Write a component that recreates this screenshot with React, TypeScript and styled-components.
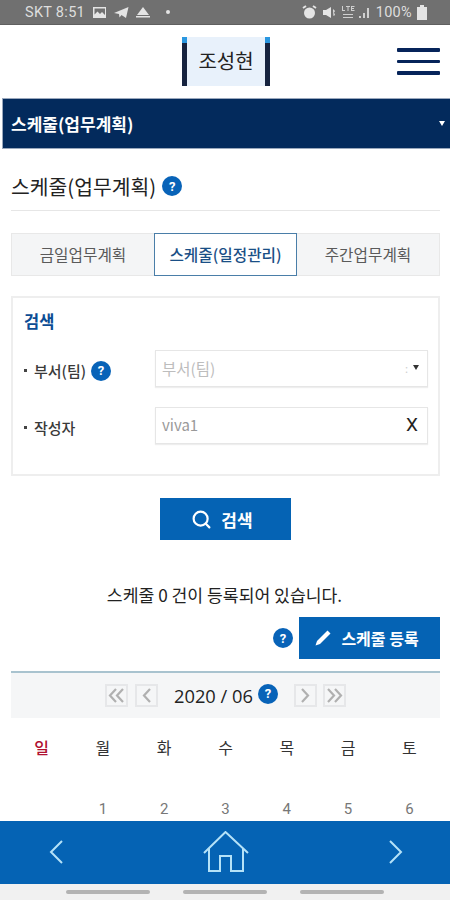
import React from "react";
import styled, { createGlobalStyle } from "styled-components";
import { Search } from "lucide-react";

const Global = createGlobalStyle`
  html, body { margin: 0; padding: 0; background: #fff; }
  * { box-sizing: border-box; }
  body { font-family: "Noto Sans CJK KR", "Noto Sans", sans-serif; }
`;

const Screen = styled.div`
  width: 450px;
  height: 900px;
  display: flex;
  flex-direction: column;
  overflow: hidden;
  background: #fff;
`;

const StatusBar = styled.div`
  height: 25px;
  flex: none;
  background: #707070;
  border-bottom: 1px solid #5f5f5f;
  color: #dedede;
  font: 400 14.5px Roboto, sans-serif;
  letter-spacing: 0.3px;
  display: flex;
  align-items: center;
  justify-content: space-between;
  padding: 0 23px 0 25px;
`;
const StatusGroup = styled.div`
  display: flex;
  align-items: center;
  gap: ${(p: { $gap: number }) => p.$gap}px;
`;

const Header = styled.header`
  height: 73px;
  flex: none;
  position: relative;
  display: flex;
  justify-content: center;
  padding-top: 12px;
`;
const Logo = styled.div`
  width: 88px;
  height: 49px;
  margin-left: 2px;
  background: #e8f1fb;
  border-left: 5px solid #16233f;
  border-right: 5px solid #16233f;
  display: flex;
  align-items: center;
  justify-content: center;
  font-size: 20px;
  font-weight: 400;
  color: #222;
  position: relative;
  padding-bottom: 2px;
  &::before, &::after {
    content: "";
    position: absolute;
    top: 0;
    width: 5px;
    height: 6px;
    background: #2a97e0;
  }
  &::before { left: -5px; }
  &::after { right: -5px; }
`;
const Burger = styled.div`
  position: absolute;
  left: 397px;
  top: 23px;
  width: 43px;
  display: flex;
  flex-direction: column;
  gap: 8px;
  span {
    display: block;
    height: 3.500px;
    border-radius: 1px;
    background: #06245a;
  }
`;

const NavSelect = styled.div`
  height: 51px;
  flex: none;
  margin-left: 2px;
  background: #032a5c;
  border: 1px solid #9aa8bd;
  border-right: none;
  color: #fff;
  font-size: 17px;
  font-weight: 700;
  display: flex;
  align-items: center;
  justify-content: space-between;
  padding: 0 5px 0 8px;
`;
const Caret = styled.span`
  width: 0;
  height: 0;
  border-left: 3px solid transparent;
  border-right: 3px solid transparent;
  border-top: 5px solid ${(p: { $color: string }) => p.$color};
`;

const Content = styled.main`
  flex: 1;
  min-height: 0;
  overflow: hidden;
  padding: 0 10px 0 11px;
`;

const Title = styled.div`
  height: 62px;
  border-bottom: 1px solid #e6e6e6;
  display: flex;
  align-items: center;
  gap: 6px;
  font-size: 20.400px;
  color: #222;
  padding-top: 13px;
`;
const Help = styled.span`
  width: 20px;
  height: 20px;
  flex: none;
  border-radius: 50%;
  background: #0863b8;
  color: #fff;
  font: 700 13px/1 Roboto, sans-serif;
  display: inline-flex;
  align-items: center;
  justify-content: center;
`;

const Tabs = styled.div`
  margin-top: 22px;
  height: 43px;
  display: grid;
  grid-template-columns: 142px 143px 142px;
  background: #f4f5f6;
  border: 1px solid #e8e8e8;
`;
const Tab = styled.div<{ $active?: boolean }>`
  display: flex;
  align-items: center;
  justify-content: center;
  font-size: 15.700px;
  margin: ${(p) => (p.$active ? "-1px 0" : "0")};
  color: ${(p) => (p.$active ? "#1a4f86" : "#5a5a5a")};
  font-weight: ${(p) => (p.$active ? 500 : 400)};
  background: ${(p) => (p.$active ? "#fff" : "transparent")};
  border: ${(p) => (p.$active ? "1.500px solid #4a7ea8" : "none")};
`;

const SearchBox = styled.section`
  margin-top: 20px;
  height: 180px;
  border: 2px solid #eeeeee;
  padding: 11px 10px 0 11px;
`;
const SearchHeading = styled.div`
  font-size: 16.500px;
  font-weight: 700;
  color: #0b4c94;
  line-height: 24px;
  height: 41px;
`;
const FieldRow = styled.div`
  display: grid;
  grid-template-columns: 131px 1fr;
  align-items: center;
  height: 37px;
  margin-bottom: 20px;
`;
const FieldLabel = styled.div`
  display: flex;
  align-items: center;
  gap: 5px;
  font-size: 15px;
  font-weight: 500;
  color: #3a3a3a;
  padding-top: 4px;
  &::before {
    content: "";
    width: 3px;
    height: 3px;
    background: #444;
    margin-right: 2px;
  }
`;
const FieldInput = styled.div<{ $muted?: boolean }>`
  height: 37px;
  border: 1px solid #e6e6e6;
  box-shadow: 0 1px 1px #eee;
  display: flex;
  align-items: center;
  justify-content: space-between;
  padding: 0 8px 2px 6px;
  font-size: ${(p) => (p.$muted ? 15.5 : 15)}px;
  color: ${(p) => (p.$muted ? "#bdbdbd" : "#999")};
`;
const SelectEnd = styled.span`
  display: flex;
  align-items: center;
  gap: 5px;
  font-size: 11px;
  color: #d0d0d0;
`;
const ClearMark = styled.span`
  font: 400 19px Roboto, sans-serif;
  color: #222;
  margin-right: 1px;
`;

const SearchRow = styled.div`
  display: flex;
  justify-content: center;
  margin-top: 22px;
`;
const PrimaryButton = styled.div<{ $w: number; $gap: number; $pr: number; $fs: number }>`
  width: ${(p) => p.$w}px;
  height: 42px;
  background: #0563b4;
  color: #fff;
  display: flex;
  align-items: center;
  justify-content: center;
  gap: ${(p) => p.$gap}px;
  padding-right: ${(p) => p.$pr}px;
  font-size: ${(p) => p.$fs}px;
  font-weight: 700;
`;

const CountText = styled.div`
  margin-top: 42px;
  height: 26px;
  line-height: 26px;
  text-align: center;
  font-size: 17.200px;
  color: #222;
  padding-right: 2px;
`;
const ActionRow = styled.div`
  display: flex;
  justify-content: flex-end;
  align-items: center;
  gap: 6px;
  margin-top: 9px;
`;
const Pager = styled.div`
  margin-top: 12px;
  height: 47px;
  border-top: 2px solid #a9c3cf;
  background: #f5f6f7;
  display: flex;
  align-items: center;
  padding: 0 0 0 94px;
`;
const PageButton = styled.span<{ $ml: number }>`
  width: 23px;
  height: 23px;
  margin-left: ${(p) => p.$ml}px;
  border: 2px solid #e6e7e9;
  color: #b0b0b0;
  display: inline-flex;
  align-items: center;
  justify-content: center;
`;
const MonthText = styled.span`
  margin: 0 5px 0 16px;
  font: 400 18.300px "Open Sans", Roboto, sans-serif;
  color: #222;
  white-space: nowrap;
`;
const PagerHelp = styled(Help)`
  margin-top: -4px;
`;
const Calendar = styled.div`
  display: grid;
  grid-template-columns: repeat(7, 1fr);
  grid-auto-rows: 62px;
  margin-top: 16px;
`;
const Cell = styled.div<{ $sun?: boolean }>`
  text-align: center;
  font-size: 16px;
  line-height: 26px;
  font-weight: ${(p) => (p.$sun ? 500 : 400)};
  color: ${(p) => (p.$sun ? "#b01030" : "#333")};
`;
const DayNum = styled.div`
  text-align: center;
  font: 400 15px/26px Roboto, sans-serif;
  color: #777;
`;

const BottomBar = styled.nav`
  height: 63px;
  flex: none;
  background: #0563b4;
  display: flex;
  align-items: center;
  justify-content: space-between;
  padding: 0 47px 2px 49px;
  color: #b5e2f8;
`;
const SoftNav = styled.div`
  height: 16px;
  flex: none;
  background: #f1f1f1;
  display: grid;
  grid-template-columns: repeat(3, 84px);
  justify-content: center;
  column-gap: 33px;
  align-items: center;
  padding-bottom: 1px;
  span {
    height: 4px;
    border-radius: 2px;
    background: #b3b3b3;
  }
`;

const Dbl = ({ dir }: { dir: "l" | "r" }) => (
  <svg width="18" height="15" viewBox="0 0 18 15" fill="none" stroke="currentColor" strokeWidth="2.2">
    {dir === "l" ? <path d="M8 1 2 7.500 8 14M15 1 9 7.500 15 14" /> : <path d="M3 1l6 6.500L3 14M10 1l6 6.500-6 6.500" />}
  </svg>
);
const Sgl = ({ dir }: { dir: "l" | "r" }) => (
  <svg width="10" height="15" viewBox="0 0 10 15" fill="none" stroke="currentColor" strokeWidth="2.2">
    {dir === "l" ? <path d="M8 1 2 7.500 8 14" /> : <path d="M2 1l6 6.500L2 14" />}
  </svg>
);

const days = ["일", "월", "화", "수", "목", "금", "토"];
const nums = ["", "1", "2", "3", "4", "5", "6"];

export default function App() {
  return (
    <Screen>
      <Global />
      <StatusBar>
        <StatusGroup $gap={7}>
          <span>SKT 8:51</span>
          <svg width="15" height="13" viewBox="0 0 15 13" fill="#e4e4e4">
            <path d="M1 1h13v11H1zm1.500 1.500v6l3-3 2.500 2.500 2-2 3 3V2.500z" fillRule="evenodd" />
          </svg>
          <svg width="15" height="13" viewBox="0 0 15 13" fill="#e4e4e4">
            <path d="M0 7 14.500 1 12 12 7.500 9 5.500 11.500 5 8z" />
          </svg>
          <svg width="15" height="11" viewBox="0 0 15 11" fill="#e4e4e4">
            <path d="M7 0l3 4 3 4H1l3-4zM0 9h14v1.500H0z" />
          </svg>
          <svg width="14" height="6" viewBox="0 0 14 6" fill="#e4e4e4">
            <circle cx="10" cy="3" r="2" />
          </svg>
        </StatusGroup>
        <StatusGroup $gap={5}>
          <svg width="15" height="14" viewBox="0 0 15 14" fill="none" stroke="#e4e4e4" strokeWidth="2">
            <circle cx="7.500" cy="8" r="4.500" fill="#e4e4e4" />
            <path d="M1 3l3-2M14 3l-3-2" />
          </svg>
          <svg width="14" height="13" viewBox="0 0 14 13" fill="#e4e4e4">
            <path d="M1 4h3l5-3v11L4 9H1zM11 3l2 2-1 1.500L13 9l-1.500 1z" />
          </svg>
          <svg width="30" height="14" viewBox="0 0 30 14" fill="#d0d0d0">
            <path d="M1 1v5h3V5H2V1zM5 1h4v1H7.500v4h-1V2H5zM10 1h3.500v1H11v1h2v1h-2v1h2.500v1H10zM2 9h10v1H2zM2 12h10v1H2z" />
            <path d="M18 11h2v2h-2zM22 8h2v5h-2zM26 3h2v10h-2z" />
          </svg>
          <span>100%</span>
          <svg width="10" height="15" viewBox="0 0 10 15" fill="#e4e4e4">
            <path d="M3 0h4v2h3v13H0V2h3z" />
          </svg>
        </StatusGroup>
      </StatusBar>

      <Header>
        <Logo>조성현</Logo>
        <Burger>
          <span />
          <span />
          <span />
        </Burger>
      </Header>

      <NavSelect>
        스케줄(업무계획)
        <Caret $color="#fff" />
      </NavSelect>

      <Content>
        <Title>
          스케줄(업무계획) <Help>?</Help>
        </Title>

        <Tabs>
          <Tab>금일업무계획</Tab>
          <Tab $active>스케줄(일정관리)</Tab>
          <Tab>주간업무계획</Tab>
        </Tabs>

        <SearchBox>
          <SearchHeading>검색</SearchHeading>
          <FieldRow>
            <FieldLabel>
              부서(팀) <Help>?</Help>
            </FieldLabel>
            <FieldInput $muted>
              부서(팀)
              <SelectEnd>
                :
                <Caret $color="#333" />
              </SelectEnd>
            </FieldInput>
          </FieldRow>
          <FieldRow>
            <FieldLabel>작성자</FieldLabel>
            <FieldInput>
              viva1
              <ClearMark>X</ClearMark>
            </FieldInput>
          </FieldRow>
        </SearchBox>

        <SearchRow>
          <PrimaryButton $w={131} $gap={9} $pr={7} $fs={17}>
            <Search size={21} strokeWidth={2.500} />
            검색
          </PrimaryButton>
        </SearchRow>

        <CountText>스케줄 0 건이 등록되어 있습니다.</CountText>

        <ActionRow>
          <Help>?</Help>
          <PrimaryButton $w={141} $gap={10} $pr={5} $fs={16}>
            <svg width="16" height="16" viewBox="0 0 16 16" fill="#fff">
              <path d="M12.500 0.500 15.500 3.500 5 14 0.500 15.500 2 11z" />
            </svg>
            스케줄 등록
          </PrimaryButton>
        </ActionRow>

        <Pager>
          <PageButton $ml={0}>
            <Dbl dir="l" />
          </PageButton>
          <PageButton $ml={7}>
            <Sgl dir="l" />
          </PageButton>
          <MonthText>2020 / 06</MonthText>
          <PagerHelp>?</PagerHelp>
          <PageButton $ml={16}>
            <Sgl dir="r" />
          </PageButton>
          <PageButton $ml={6}>
            <Dbl dir="r" />
          </PageButton>
        </Pager>

        <Calendar>
          {days.map((d) => (
            <Cell key={d} $sun={d === "일"}>
              {d}
            </Cell>
          ))}
          {nums.map((n, i) => (
            <DayNum key={i}>{n}</DayNum>
          ))}
        </Calendar>
      </Content>

      <BottomBar>
        <svg width="14" height="24" viewBox="0 0 14 24" fill="none" stroke="currentColor" strokeWidth="2">
          <path d="M13 1 2 12l11 11" />
        </svg>
        <svg width="46" height="42" viewBox="0 0 46 42" fill="none" stroke="currentColor" strokeWidth="2">
          <path d="M1 22 22.500 1 45 22" />
          <path d="M6 17v23h11V25h11v15h12V17" />
        </svg>
        <svg width="14" height="24" viewBox="0 0 14 24" fill="none" stroke="currentColor" strokeWidth="2">
          <path d="M1 1l11 11L1 23" />
        </svg>
      </BottomBar>
      <SoftNav>
        <span />
        <span />
        <span />
      </SoftNav>
    </Screen>
  );
}
